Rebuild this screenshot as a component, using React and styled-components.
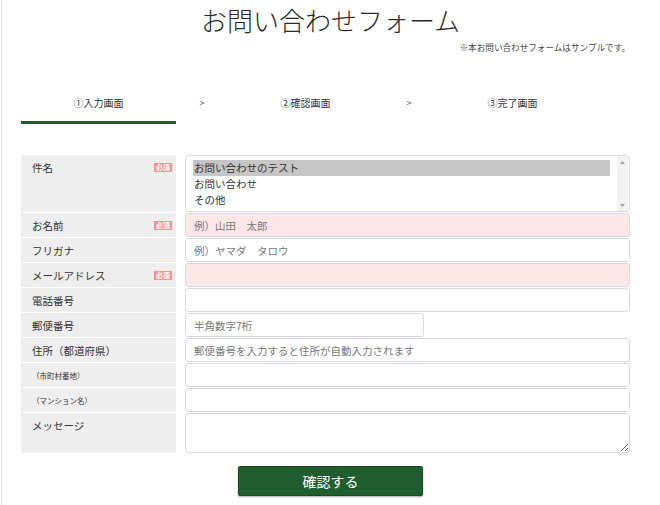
import React from "react";
import styled, { createGlobalStyle } from "styled-components";

const GlobalStyle = createGlobalStyle`
  html, body {
    margin: 0;
    padding: 0;
    background: #fff;
  }
  body {
    font-family: "Noto Sans CJK JP", "Noto Sans", sans-serif;
    color: #333;
  }
  * {
    box-sizing: border-box;
  }
`;

const Page = styled.div`
  width: 660px;
  height: 505px;
  margin-left: 1px;
  border-left: 1px solid #e4e4e4;
  overflow: hidden;
`;

const Title = styled.h1`
  margin: 0;
  padding-top: 5px;
  font-size: 26px;
  line-height: 30px;
  font-weight: 300;
  color: #2a2a2a;
  text-align: center;
  margin-left: -2px;
`;

const Note = styled.p`
  margin: 6px 0 0;
  padding-right: 31px;
  font-size: 8.6px;
  line-height: 12px;
  color: #444;
  text-align: right;
`;

const Content = styled.div`
  padding: 0 30px 0 19px;
`;

const Steps = styled.div`
  display: grid;
  grid-template-columns: 155px 52px 155px 52px 155px;
  margin-top: 43px;
`;

const Step = styled.div`
  font-size: 10px;
  line-height: 14px;
  text-align: center;
  color: #333;
  padding-bottom: 11px;
  border-bottom: 3px solid ${(p) => (p.$active ? "#1f5e2b" : "transparent")};
`;

const Arrow = styled.div`
  font-size: 9px;
  line-height: 14px;
  text-align: center;
  color: #555;
`;

const Form = styled.div`
  display: grid;
  grid-template-columns: 155px 445px;
  grid-template-rows: 57px repeat(8, 24px) 40px;
  column-gap: 9px;
  row-gap: 1px;
  margin-top: 31px;
`;

const Label = styled.div`
  display: flex;
  justify-content: space-between;
  align-items: flex-start;
  background: #eeeeee;
  padding: 6px 4px 0 11px;
  font-size: ${(p) => (p.$small ? "7.5px" : "10.5px")};
  line-height: 14px;
  color: #333;
`;

const Badge = styled.span`
  margin-top: 2px;
  padding: 0 2px;
  background: #f79292;
  color: #fff;
  font-size: 7px;
  line-height: 9px;
  font-weight: 700;
`;

const Field = styled.input`
  display: block;
  width: ${(p) => p.$width || "100%"};
  height: 24px;
  margin: 0;
  padding: 0 8px;
  border: 1px solid #d6dae0;
  border-radius: 3px;
  background: ${(p) => (p.$required ? "#fde7e8" : "#fff")};
  font-family: "Noto Sans CJK JP", "Noto Sans", sans-serif;
  font-size: 10.5px;
  color: #333;
  outline: none;

  &::placeholder {
    color: #777;
  }
`;

const Message = styled.textarea`
  display: block;
  width: 100%;
  height: 40px;
  margin: 0;
  padding: 4px 8px;
  border: 1px solid #d6dae0;
  border-radius: 3px;
  font-family: "Noto Sans CJK JP", "Noto Sans", sans-serif;
  font-size: 10.5px;
  outline: none;
`;

const ListBox = styled.div`
  display: flex;
  border: 1px solid #d6dae0;
  border-radius: 3px;
  background: #fff;
  overflow: hidden;
`;

const Options = styled.div`
  flex: 1;
  padding: 4px 7px 0 7px;
`;

const Option = styled.div`
  height: 16px;
  padding-left: 1px;
  font-size: 10.5px;
  line-height: 16px;
  color: #333;
  background: ${(p) => (p.$selected ? "#c6c6c6" : "transparent")};
`;

const ScrollBar = styled.div`
  width: 11px;
  margin-right: 1px;
  background: #f1f1f1;
  display: flex;
  flex-direction: column;
  justify-content: space-between;
  align-items: center;
  padding: 5px 0 4px;
`;

const ScrollArrow = styled.svg`
  width: 5px;
  height: 3px;
  fill: #a3a3a3;
`;

const ButtonRow = styled.div`
  display: flex;
  justify-content: center;
  padding-left: 9px;
  margin-top: 13px;
`;

const Submit = styled.button`
  width: 185px;
  height: 30px;
  background: #215e2f;
  border: 1px solid #1a4a25;
  border-radius: 2px;
  box-shadow: 0 1px 2px rgba(0, 0, 0, 0.35);
  color: #fff;
  font-family: "Noto Sans CJK JP", "Noto Sans", sans-serif;
  font-size: 14px;
  cursor: pointer;
`;

const rows = [
  { label: "お名前", required: true, placeholder: "例）山田　太郎" },
  { label: "フリガナ", placeholder: "例）ヤマダ　タロウ" },
  { label: "メールアドレス", required: true },
  { label: "電話番号" },
  { label: "郵便番号", placeholder: "半角数字7桁", width: "239px" },
  { label: "住所（都道府県）", placeholder: "郵便番号を入力すると住所が自動入力されます" },
  { label: "（市町村番地）", small: true },
  { label: "（マンション名）", small: true },
];

export default function App() {
  return (
    <Page>
      <GlobalStyle />
      <Title>お問い合わせフォーム</Title>
      <Note>※本お問い合わせフォームはサンプルです。</Note>
      <Content>
        <Steps>
          <Step $active>①入力画面</Step>
          <Arrow>&gt;</Arrow>
          <Step>②確認画面</Step>
          <Arrow>&gt;</Arrow>
          <Step>③完了画面</Step>
        </Steps>

        <Form>
          <Label>
            件名
            <Badge>必須</Badge>
          </Label>
          <ListBox>
            <Options>
              <Option $selected>お問い合わせのテスト</Option>
              <Option>お問い合わせ</Option>
              <Option>その他</Option>
            </Options>
            <ScrollBar>
              <ScrollArrow viewBox="0 0 5 3">
                <path d="M2.5 0 L5 3 L0 3 Z" />
              </ScrollArrow>
              <ScrollArrow viewBox="0 0 5 3">
                <path d="M0 0 L5 0 L2.5 3 Z" />
              </ScrollArrow>
            </ScrollBar>
          </ListBox>

          {rows.map((r) => (
            <React.Fragment key={r.label}>
              <Label $small={r.small}>
                {r.label}
                {r.required && <Badge>必須</Badge>}
              </Label>
              <Field
                $required={r.required}
                $width={r.width}
                placeholder={r.placeholder}
              />
            </React.Fragment>
          ))}

          <Label>メッセージ</Label>
          <Message />
        </Form>

        <ButtonRow>
          <Submit>確認する</Submit>
        </ButtonRow>
      </Content>
    </Page>
  );
}
